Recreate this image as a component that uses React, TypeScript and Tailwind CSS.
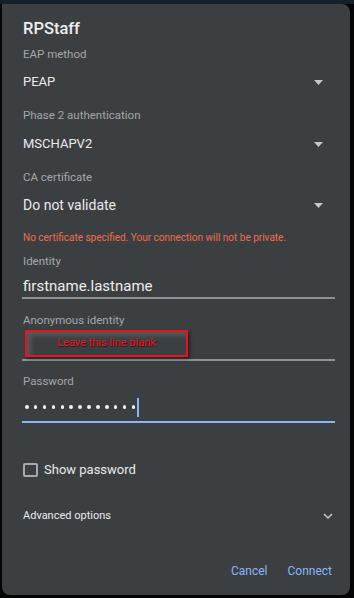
import React from "react";

const Arrow = () => (
  <svg width="9" height="5" viewBox="0 0 9 5" className="mr-[12px]">
    <path d="M0 0 L9 0 L4.5 5 Z" fill="#c4c7cb" />
  </svg>
);

const Label = ({ children, mt }: { children: React.ReactNode; mt: string }) => (
  <div className={`h-[16px] flex items-center text-[11.5px] text-[#a3a7ab] ${mt}`}>{children}</div>
);

export default function App() {
  const dots = Array.from({ length: 13 });
  return (
    <div
      className="w-[354px] h-[598px] bg-[#050505] flex flex-col overflow-hidden"
      style={{ fontFamily: "Roboto, 'Liberation Sans', sans-serif" }}
    >
      <div className="h-[4px] shrink-0 bg-[#16202b]" />
      <div className="ml-[2px] w-[348px] h-[591px] bg-[#3c3f42] rounded-b-[8px] rounded-tr-[8px] flex flex-col pl-[21px] pr-[15px] pt-[14px]">
        <div className="h-[23px] flex items-center text-[16.5px] text-[#eceef0] font-medium">RPStaff</div>

        <Label mt="mt-[6px]">EAP method</Label>
        <div className="mt-[9px] h-[20px] flex items-center justify-between text-[13px] text-[#e8eaed]">
          <span>PEAP</span>
          <Arrow />
        </div>

        <Label mt="mt-[16px]">Phase 2 authentication</Label>
        <div className="mt-[10px] h-[20px] flex items-center justify-between text-[13px] text-[#e8eaed]">
          <span>MSCHAPV2</span>
          <Arrow />
        </div>

        <Label mt="mt-[16px]">CA certificate</Label>
        <div className="mt-[9px] h-[20px] flex items-center justify-between text-[14px] text-[#e8eaed]">
          <span>Do not validate</span>
          <Arrow />
        </div>

        <div className="mt-[15px] h-[15px] flex items-center text-[10px] text-[#ee6c4d]">
          No certificate specified. Your connection will not be private.
        </div>

        <Label mt="mt-[9px]">Identity</Label>
        <div className="mt-[6px] -ml-[1px] pl-[1px] h-[23px] flex items-center border-b-2 border-[#8f9397] text-[15px] text-[#eceef0]">
          firstname.lastname
        </div>

        <Label mt="mt-[14px]">Anonymous identity</Label>
        <div className="h-[32px] -ml-[1px] flex items-start border-b-2 border-[#8f9397]">
          <div className="mt-[1px] ml-[3px] w-[163px] h-[27px] border-2 border-[#e8131b] flex items-center justify-center shadow-[inset_4px_4px_5px_rgba(255,255,255,0.13),2px_2px_3px_rgba(0,0,0,0.45)]">
            <span className="text-[11px] text-[#f0161c] [text-shadow:1px_1px_1px_rgba(0,0,0,0.6)]">
              Leave this line blank
            </span>
          </div>
        </div>

        <Label mt="mt-[13px]">Password</Label>
        <div className="mt-[2px] -ml-[1px] h-[31px] flex items-center border-b-2 border-[#8ab4f8] pl-[3px]">
          <div className="flex items-center gap-[5.4px] mt-[1px]">
            {dots.map((_, i) => (
              <div key={i} className="w-[3.5px] h-[3.5px] rounded-full bg-[#f1f3f4]" />
            ))}
          </div>
          <div className="ml-[2px] w-[2px] h-[19px] bg-[#8ab4f8] mt-[1px]" />
        </div>

        <div className="mt-[37px] h-[20px] flex items-center">
          <div className="w-[15px] h-[14px] border-2 border-[#a6aaae] rounded-[2px]" />
          <span className="ml-[6px] text-[13px] text-[#e8eaed]">Show password</span>
        </div>

        <div className="mt-[26px] h-[20px] flex items-center justify-between">
          <span className="text-[11px] text-[#e8eaed]">Advanced options</span>
          <svg width="10" height="6" viewBox="0 0 10 6" className="mr-[2px]">
            <path d="M1 1 L5 5 L9 1" fill="none" stroke="#c4c7cb" strokeWidth="1.5" />
          </svg>
        </div>

        <div className="mt-[35px] h-[20px] flex items-center justify-end gap-[20px] text-[12px] text-[#8ab4f8] pr-[3px]">
          <span>Cancel</span>
          <span>Connect</span>
        </div>
      </div>
    </div>
  );
}
